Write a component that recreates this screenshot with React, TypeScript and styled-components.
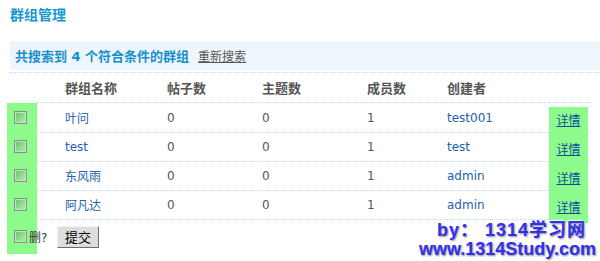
import * as React from "react";
import styled, { createGlobalStyle } from "styled-components";

const GlobalStyle = createGlobalStyle`
  body {
    margin: 0;
    background: #ffffff;
    font-family: "DejaVu Sans", "Noto Sans CJK SC", sans-serif;
    font-size: 12px;
    color: #555;
  }
`;

const COLUMNS = "30px 130px 95px 105px 80px 102px 42px";
const GREEN = "#8cfb8c";
const DOTS = "1px dotted #bcdcf2";

const Page = styled.div`
  position: relative;
  width: 600px;
  height: 261px;
  overflow: hidden;
`;

const Title = styled.h2`
  margin: 0;
  padding: 6px 10px 0;
  height: 35px;
  font-size: 14px;
  line-height: 18px;
  font-weight: bold;
  color: #1597d0;
`;

const SearchWrap = styled.div`
  margin-left: 10px;
  padding-bottom: 2px;
  border-bottom: ${DOTS};
`;

const SearchBar = styled.div`
  display: flex;
  align-items: center;
  gap: 9px;
  height: 29px;
  padding-left: 5px;
  background: #eef5fd;
`;

const Found = styled.span`
  font-size: 13px;
  font-weight: bold;
  color: #1590cc;
`;

const Research = styled.a`
  font-size: 12px;
  color: #555;
  text-decoration: underline;
`;

const Table = styled.div`
  margin-left: 7px;
  width: 584px;
`;

const Row = styled.div<{ $head?: boolean }>`
  display: grid;
  grid-template-columns: ${COLUMNS};
  height: ${(p) => (p.$head ? 30 : 29)}px;
`;

const Cell = styled.div<{ $head?: boolean; $link?: boolean }>`
  display: flex;
  align-items: center;
  border-bottom: ${DOTS};
  font-size: ${(p) => (p.$head ? 13 : 12)}px;
  font-weight: ${(p) => (p.$head ? "bold" : "normal")};
  color: ${(p) => (p.$head ? "#555" : p.$link ? "#2462ad" : "#555")};
`;

const NameCell = styled(Cell)`
  padding-left: 28px;
`;

const CheckCell = styled.div<{ $on?: boolean }>`
  display: flex;
  align-items: center;
  padding-left: 7px;
  background: ${(p) => (p.$on ? GREEN : "transparent")};
  border-bottom: 1px solid ${(p) => (p.$on ? GREEN : "transparent")};
`;

const DetailCell = styled.div`
  border-bottom: ${DOTS};
`;

const DetailBox = styled.div`
  display: flex;
  align-items: center;
  justify-content: center;
  width: 39px;
  height: 29px;
  background: ${GREEN};
  transform: translateY(4px);
`;

const DetailLink = styled.a`
  font-size: 12px;
  color: #0b4f9c;
  text-decoration: underline;
  margin-top: -4px;
`;

const Check = styled.input.attrs({ type: "checkbox" })`
  appearance: none;
  flex-shrink: 0;
  margin: 0;
  width: 13px;
  height: 13px;
  border: 1px solid #8e8e8e;
  background: linear-gradient(135deg, #62c562, #b4f0b4);
  box-shadow: inset 0 0 0 1px #b8e8b8;
`;

const Footer = styled.div`
  display: flex;
  align-items: center;
  height: 35px;
`;

const FooterCheck = styled.div`
  display: flex;
  align-items: center;
  width: 30px;
  height: 35px;
  padding-left: 7px;
  box-sizing: border-box;
  background: ${GREEN};
  white-space: nowrap;
  overflow: visible;
`;

const DelLabel = styled.span`
  margin-left: 2px;
  font-size: 12px;
  color: #333;
`;

const Submit = styled.button`
  margin-left: 20px;
  width: 42px;
  height: 22px;
  padding: 0;
  font-family: "Noto Sans CJK SC", sans-serif;
  font-size: 13px;
  color: #000;
  background: #dedede;
  border: 1px solid;
  border-color: #f4f4f4 #6e6e6e #6e6e6e #f4f4f4;
`;

const Watermark = styled.div`
  position: absolute;
  right: 4px;
  bottom: 2px;
  font-family: "Liberation Sans", "Noto Sans CJK SC", sans-serif;
  font-weight: bold;
  font-size: 18px;
  line-height: 19px;
  color: #3030f0;
  text-shadow: 1px 1px 2px #8a8a8a, -1px -1px 1px #ffffff;
  text-align: right;
`;

const WmLine = styled.div<{ $indent?: number }>`
  padding-right: ${(p) => p.$indent ?? 0}px;
  letter-spacing: ${(p) => (p.$indent ? 1 : 0)}px;
`;

const groups = [
  { name: "叶问", posts: 0, topics: 0, members: 1, creator: "test001" },
  { name: "test", posts: 0, topics: 0, members: 1, creator: "test" },
  { name: "东风雨", posts: 0, topics: 0, members: 1, creator: "admin" },
  { name: "阿凡达", posts: 0, topics: 0, members: 1, creator: "admin" },
];

export default function App() {
  return (
    <Page>
      <GlobalStyle />
      <Title>群组管理</Title>
      <SearchWrap>
        <SearchBar>
          <Found>共搜索到 4 个符合条件的群组</Found>
          <Research href="#">重新搜索</Research>
        </SearchBar>
      </SearchWrap>
      <Table>
        <Row $head>
          <CheckCell $on={false} />
          <NameCell $head>群组名称</NameCell>
          <Cell $head>帖子数</Cell>
          <Cell $head>主题数</Cell>
          <Cell $head>成员数</Cell>
          <Cell $head>创建者</Cell>
          <Cell $head />
        </Row>
        {groups.map((g) => (
          <Row key={g.name}>
            <CheckCell $on>
              <Check />
            </CheckCell>
            <NameCell $link>{g.name}</NameCell>
            <Cell>{g.posts}</Cell>
            <Cell>{g.topics}</Cell>
            <Cell>{g.members}</Cell>
            <Cell $link>{g.creator}</Cell>
            <DetailCell>
              <DetailBox>
                <DetailLink href="#">详情</DetailLink>
              </DetailBox>
            </DetailCell>
          </Row>
        ))}
        <Footer>
          <FooterCheck>
            <Check />
            <DelLabel>删?</DelLabel>
          </FooterCheck>
          <Submit>提交</Submit>
        </Footer>
      </Table>
      <Watermark>
        <WmLine $indent={10}>by： 1314学习网</WmLine>
        <WmLine>www.1314Study.com</WmLine>
      </Watermark>
    </Page>
  );
}
